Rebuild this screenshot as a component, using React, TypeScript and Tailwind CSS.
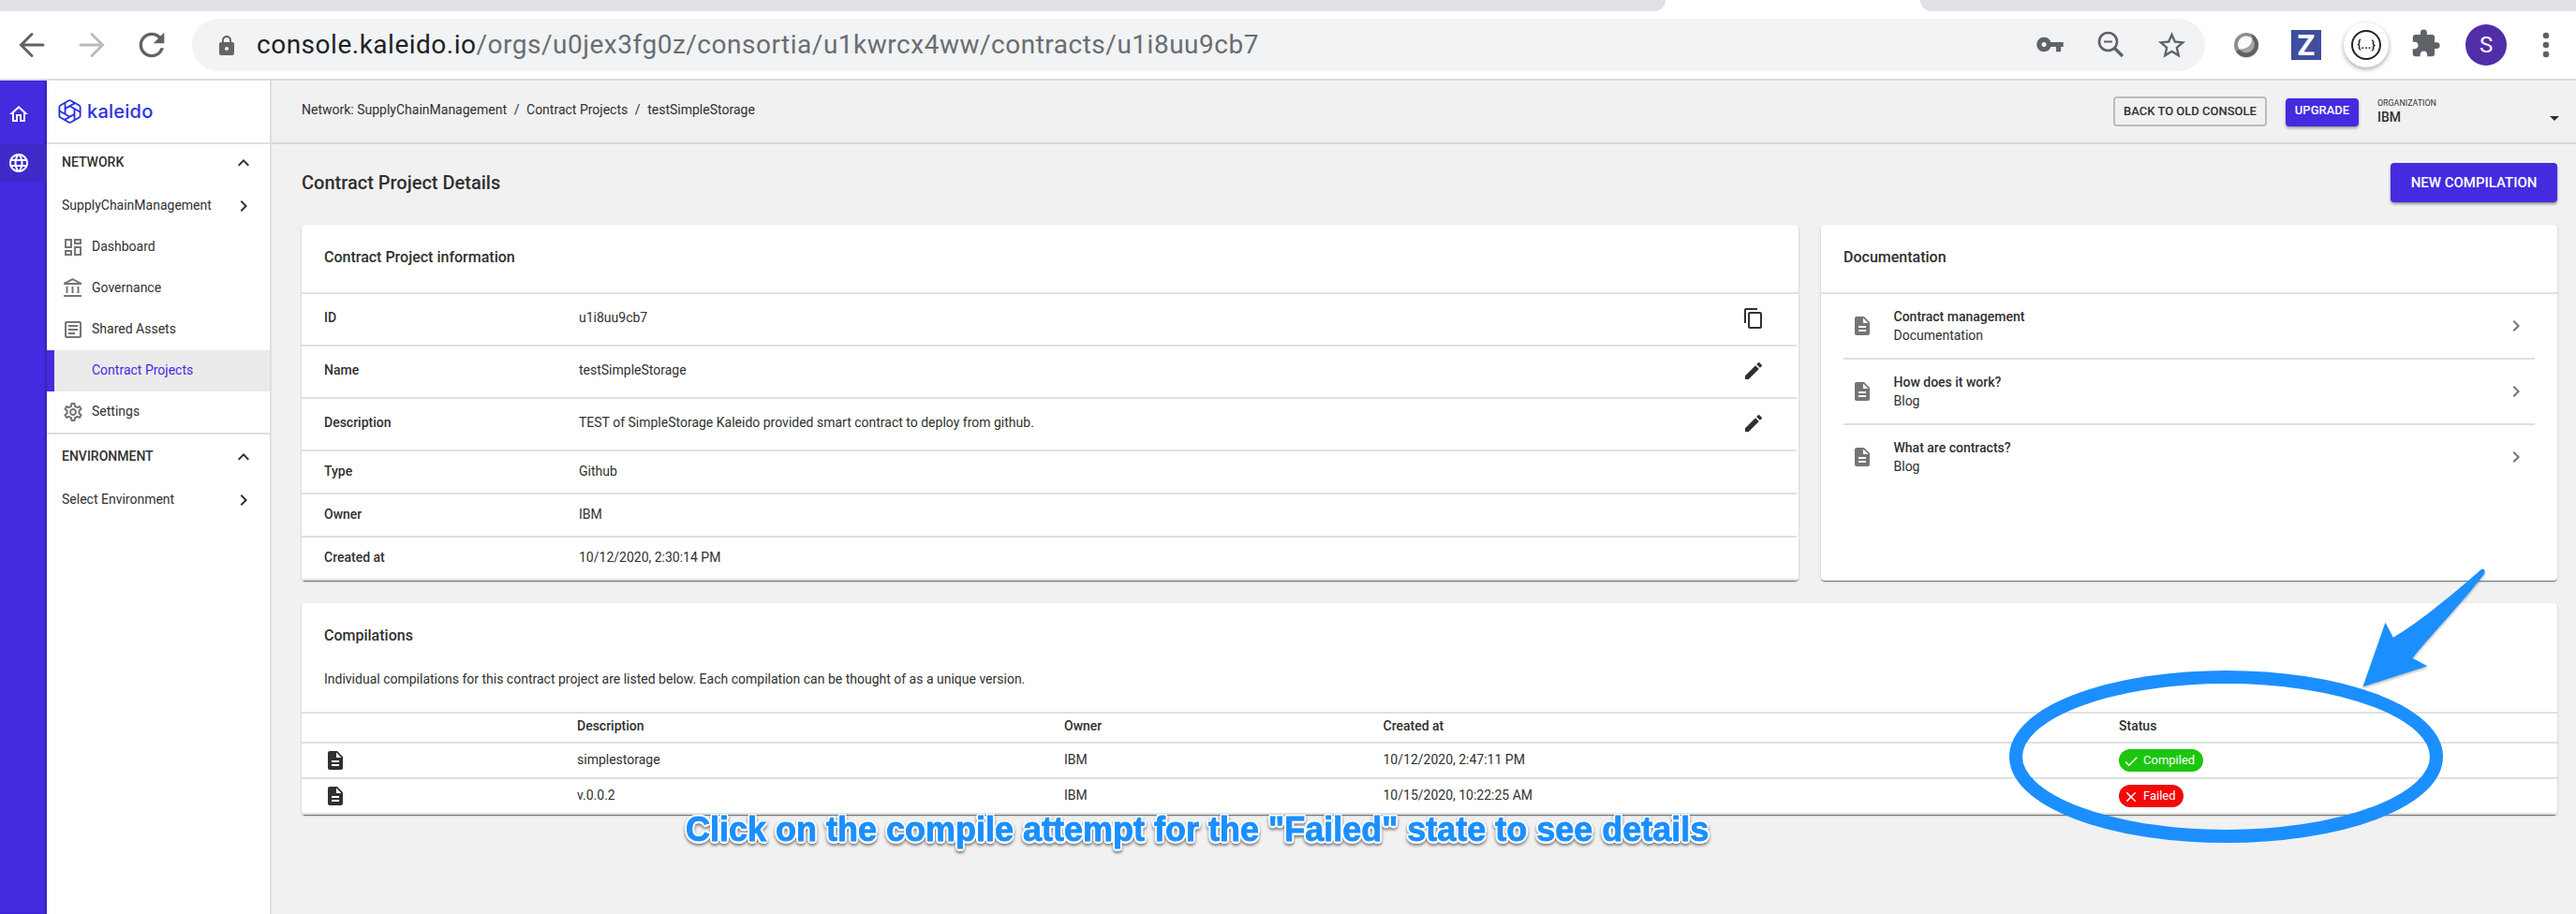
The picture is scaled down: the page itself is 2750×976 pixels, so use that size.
import React from "react";
import {
  MdArrowDropDown,
  MdCheck,
  MdChevronRight,
  MdClose,
  MdContentCopy,
  MdDescription,
  MdEdit,
  MdExpandLess,
  MdExtension,
  MdLanguage,
  MdLock,
  MdOutlineAccountBalance,
  MdOutlineArticle,
  MdOutlineDashboard,
  MdOutlineHome,
  MdOutlineSettings,
  MdRefresh,
  MdStarBorder,
  MdVpnKey,
} from "react-icons/md";

const CARD =
  "rounded-[4px] bg-white shadow-[0_2px_1px_-1px_rgba(0,0,0,0.3),0_1px_1px_0_rgba(0,0,0,0.28),0_1px_3px_0_rgba(0,0,0,0.14)]";

function TabStrip() {
  return (
    <div className="flex h-3 justify-between bg-white">
      <div className="h-3 w-[1778px] rounded-br-[14px] bg-[#dfe1e5]" />
      <div className="h-3 w-[700px] rounded-bl-[14px] bg-[#dfe1e5]" />
    </div>
  );
}

function Arrow({ className }: { className: string }) {
  return (
    <svg className={className} viewBox="0 0 28 28" fill="none" stroke="currentColor" strokeWidth="3" strokeLinecap="round">
      <path d="M26 14H3M14 2.500L2.500 14L14 25.500" strokeLinejoin="miter" />
    </svg>
  );
}

function Toolbar() {
  return (
    <div className="flex h-[74px] items-center border-b-2 border-[#dcdce0] bg-white text-[#5f6368]">
      <Arrow className="-mt-px ml-5 h-7 w-7" />
      <Arrow className="-mt-px ml-[36px] h-7 w-7 rotate-180 text-[#bcbcbe]" />
      <MdRefresh size={40} className="ml-[30px]" />
      <div className="ml-[23px] flex h-14 w-[2149px] shrink-0 items-center rounded-full bg-[#f1f3f4] pl-[25px]">
        <MdLock size={24} className="mt-px text-[#646567]" />
        <div className="ml-5 grow whitespace-nowrap text-[28px] tracking-[0.51px] text-[#6a6d71]">
          <span className="text-[#202124]">console.kaleido.io</span>
          /orgs/u0jex3fg0z/consortia/u1kwrcx4ww/contracts/u1i8uu9cb7
        </div>
        <MdVpnKey size={31} className="-mt-0.5 mr-[33px]" />
        <svg className="mr-[32px] h-8 w-8" viewBox="0 0 32 32" fill="none" stroke="currentColor">
          <circle cx="13.500" cy="12.500" r="9.500" strokeWidth="2.600" />
          <path d="M9 12.500h9" strokeWidth="2" />
          <path d="M20.500 19.500L29 28" strokeWidth="3.400" />
        </svg>
        <MdStarBorder size={35} className="mr-[18px]" />
      </div>
      <svg className="ml-[29px] h-8 w-[30px]" viewBox="0 0 30 32">
        <ellipse cx="15" cy="17" rx="13" ry="13.500" fill="#e4e4e4" />
        <circle cx="15" cy="16" r="13" fill="#8e8e8e" />
        <path d="M20 4A13 13 0 1 1 4 23L9 20L22 9Z" fill="#606060" />
        <circle cx="15" cy="15.500" r="9" fill="#a3a3a3" />
        <path d="M21 8.800A9 9 0 0 0 7.500 20.500C16 21 21.500 16 21 8.800Z" fill="#fafafa" />
      </svg>
      <div className="ml-[33px] flex h-8 w-8 items-center justify-center bg-[#3f4e9e] text-[31px] font-bold leading-none text-white">Z</div>
      <div className="ml-6 flex h-12 w-12 items-center justify-center rounded-full bg-white shadow-[0_2px_5px_rgba(0,0,0,0.35)]">
        <div className="flex h-8 w-8 items-center justify-center rounded-full border-2 border-[#222] pb-0.5 text-[13px] font-medium leading-none text-[#111]">
          {"{...}"}
        </div>
      </div>
      <MdExtension size={33} className="-mt-1 ml-[23px]" />
      <div className="ml-[26px] flex h-11 w-11 items-center justify-center rounded-full bg-[#512da8] text-[24px] text-white">S</div>
      <svg className="ml-[38px] h-7 w-2" viewBox="0 0 8 28" fill="currentColor">
        <circle cx="4" cy="4" r="3.300" />
        <circle cx="4" cy="14" r="3.300" />
        <circle cx="4" cy="24" r="3.300" />
      </svg>
    </div>
  );
}

function Rail() {
  return (
    <div className="flex w-[50px] shrink-0 flex-col bg-[#442be0] text-white shadow-[inset_-2px_0_2px_rgba(0,0,0,0.18)]">
      <div className="flex h-[68px] pl-2 pt-6">
        <MdOutlineHome size={24} />
      </div>
      <div className="flex h-10 items-center bg-[#3f2ac9] pl-2">
        <MdLanguage size={24} />
      </div>
    </div>
  );
}

function Logo() {
  return (
    <div className="flex h-[66px] items-center gap-[6px] pl-3 text-[#2a31e2]">
      <svg className="h-[26px] w-[25px]" viewBox="0 0 24 25" fill="none" stroke="currentColor" strokeWidth="1.800" strokeLinejoin="round">
        <path d="M10.800 1.400Q12 0.700 13.200 1.400L21.600 6.200Q22.700 6.900 22.700 8.200V16.800Q22.700 18.100 21.600 18.800L13.200 23.600Q12 24.300 10.800 23.600L2.400 18.800Q1.300 18.100 1.300 16.800V8.200Q1.300 6.900 2.400 6.200Z" />
        <path d="M7.200 9.750L17.300 4M12 7L22.500 13M16.800 9.750V21.300M16.800 15.250L6.700 21M12 18L1.500 12M7.200 15.250V3.700" />
      </svg>
      <span className="font-['Inter'] text-[20px] font-medium leading-none tracking-[0.25px]">kaleido</span>
    </div>
  );
}

function NavItem({ icon: Icon, label, active }: { icon?: React.ComponentType<{ size?: number; className?: string }>; label: string; active?: boolean }) {
  return (
    <div className={active ? "flex h-11 items-center border-l-8 border-[#442be0] bg-[#eaeaea] text-[#442be0]" : "flex h-11 items-center pl-4"}>
      {Icon ? <Icon size={24} className="mr-2 text-[#757575]" /> : <div className="w-10" />}
      <span className="pb-px">{label}</span>
    </div>
  );
}

function Sidebar() {
  return (
    <div className="w-[240px] shrink-0 border-r-2 border-[#dfdfdf] bg-white">
      <Logo />
      <div className="border-t-2 border-[#dfdfdf]">
        <div className="flex h-10 items-center justify-between px-4 font-medium">
          <span className="pb-px">NETWORK</span>
          <MdExpandLess size={24} />
        </div>
        <div className="flex h-12 items-center justify-between px-4 pt-[3px]">
          <span className="pb-px">SupplyChainManagement</span>
          <MdChevronRight size={24} />
        </div>
        <NavItem icon={MdOutlineDashboard} label="Dashboard" />
        <NavItem icon={MdOutlineAccountBalance} label="Governance" />
        <NavItem icon={MdOutlineArticle} label="Shared Assets" />
        <NavItem label="Contract Projects" active />
        <NavItem icon={MdOutlineSettings} label="Settings" />
      </div>
      <div className="border-t-2 border-[#dfdfdf]">
        <div className="flex h-[47px] items-center justify-between px-4 font-medium">
          <span className="pb-px">ENVIRONMENT</span>
          <MdExpandLess size={24} />
        </div>
        <div className="flex h-[46px] items-center justify-between px-4">
          <span className="pb-px">Select Environment</span>
          <MdChevronRight size={24} />
        </div>
      </div>
    </div>
  );
}

function PageHeader() {
  return (
    <div className="flex h-[68px] items-center border-b-2 border-[#d6d6d6] pl-8">
      <div className="flex grow gap-[7.600px] pb-[3px]">
        <span>Network: SupplyChainManagement</span>
        <span>/</span>
        <span>Contract Projects</span>
        <span>/</span>
        <span>testSimpleStorage</span>
      </div>
      <div className="flex h-8 w-[164px] items-center justify-center rounded-[4px] border-2 border-[#bcbcbc] pb-px text-[13px] font-medium">BACK TO OLD CONSOLE</div>
      <div className="ml-5 mt-0.5 flex h-[30px] w-[78px] items-center justify-center rounded-[4px] bg-[#442be0] pb-[4px] text-[13px] font-medium text-white shadow-[0_2px_3px_rgba(0,0,0,0.35)]">
        UPGRADE
      </div>
      <div className="ml-5 w-[177px]">
        <div className="text-[8.9px] leading-[12px]">ORGANIZATION</div>
        <div className="text-[14px] font-medium leading-[18px]">IBM</div>
      </div>
      <MdArrowDropDown size={24} className="mr-[11px] mt-[14px]" />
    </div>
  );
}

type InfoRow = { label: string; value: string; action?: "copy" | "edit" };

const INFO: InfoRow[] = [
  { label: "ID", value: "u1i8uu9cb7", action: "copy" },
  { label: "Name", value: "testSimpleStorage", action: "edit" },
  { label: "Description", value: "TEST of SimpleStorage Kaleido provided smart contract to deploy from github.", action: "edit" },
  { label: "Type", value: "Github" },
  { label: "Owner", value: "IBM" },
  { label: "Created at", value: "10/12/2020, 2:30:14 PM" },
];

function InfoCard() {
  return (
    <div className={"w-[1598px] " + CARD}>
      <div className="flex h-[74px] items-center border-b-2 border-[#e0e0e0] pb-[2px] pl-6 text-[16px] font-medium">Contract Project information</div>
      {INFO.map((row) => (
        <div
          key={row.label}
          className={row.action ? "mr-[2px] flex h-14 items-center border-b-2 border-[#e0e0e0] pb-[2px] pl-6" : "mr-[2px] flex h-[46px] items-center border-b-2 border-[#e0e0e0] pb-[2px] pl-6"}
        >
          <span className={row.action ? "w-[272px] pb-[2px] font-medium" : "w-[272px] font-medium"}>{row.label}</span>
          <span className={row.action ? "w-[1242px] pb-[2px]" : "w-[1242px]"}>{row.value}</span>
          {row.action === "copy" && <MdContentCopy size={24} />}
          {row.action === "edit" && <MdEdit size={24} />}
        </div>
      ))}
    </div>
  );
}

const DOCS = [
  { title: "Contract management", kind: "Documentation" },
  { title: "How does it work?", kind: "Blog" },
  { title: "What are contracts?", kind: "Blog" },
];

function DocsCard() {
  return (
    <div className={"w-[786px] " + CARD}>
      <div className="flex h-[74px] items-center border-b-2 border-[#e0e0e0] pb-[2px] pl-6 text-[16px] font-medium">Documentation</div>
      <div className="px-6">
        {DOCS.map((doc) => (
          <div key={doc.title} className="flex h-[70px] items-center border-b-2 border-[#e0e0e0] px-2 last:border-transparent">
            <MdDescription size={24} className="text-[#757575]" />
            <div className="ml-[21.500px] grow pb-px leading-5">
              <div className="font-medium">{doc.title}</div>
              <div>{doc.kind}</div>
            </div>
            <MdChevronRight size={24} className="text-[#757575]" />
          </div>
        ))}
      </div>
    </div>
  );
}

const COMPILATIONS = [
  { description: "simplestorage", created: "10/12/2020, 2:47:11 PM", ok: true },
  { description: "v.0.0.2", created: "10/15/2020, 10:22:25 AM", ok: false },
];

const COLUMNS = "grid grid-cols-[270px_520px_340.500px_785.500px_1fr] items-center border-b-2 border-[#e0e0e0] pl-6";

function CompilationsCard() {
  return (
    <div className={"mt-6 h-[226px] " + CARD}>
      <div className="flex h-[118px] flex-col border-b-2 border-[#e0e0e0] pl-6 pt-[23px]">
        <div className="text-[16px] font-medium leading-6">Compilations</div>
        <div className="mt-[23px] leading-[22px]">Individual compilations for this contract project are listed below. Each compilation can be thought of as a unique version.</div>
      </div>
      <div className={"h-8 pb-[3px] font-medium " + COLUMNS}>
        <span />
        <span>Description</span>
        <span>Owner</span>
        <span>Created at</span>
        <span>Status</span>
      </div>
      {COMPILATIONS.map((c) => (
        <div key={c.description} className={"h-[38px] " + COLUMNS}>
          <MdDescription size={24} />
          <span className="pb-[2px]">{c.description}</span>
          <span className="pb-[2px]">IBM</span>
          <span className="pb-[2px]">{c.created}</span>
          <div className="flex">
            {c.ok ? (
              <div className="flex h-6 items-center gap-1 rounded-full bg-[#1bc60d] pl-1 pr-[9px] text-[13px] text-white">
                <MdCheck size={18} className="mt-0.5" />
                Compiled
              </div>
            ) : (
              <div className="flex h-6 items-center gap-1 rounded-full bg-[#f20a0a] pl-1 pr-[8px] text-[13px] text-white">
                <MdClose size={18} className="mt-0.5" />
                Failed
              </div>
            )}
          </div>
        </div>
      ))}
    </div>
  );
}

function Annotations() {
  return (
    <>
      <svg className="pointer-events-none absolute left-[2130px] top-[590px] h-[330px] w-[540px]" viewBox="2130 590 540 330">
        <ellipse cx="2376.500" cy="808" rx="224.500" ry="85" fill="none" stroke="#1b8fff" strokeWidth="14" />
        <path
          className="drop-shadow-[0_2px_1px_rgba(0,0,0,0.25)]"
          d="M2522.500 733.300L2546.500 664.700L2554.800 680.700C2580 667 2630 625 2648.500 608.300C2651 606 2653.500 608.500 2652.300 612.500C2630 642 2590 684 2575.500 702.700L2591.300 711.300Z"
          fill="#1b8fff"
        />
      </svg>
      <div className="absolute left-[732px] top-[865px] whitespace-nowrap font-['Liberation_Sans'] text-[36px] font-bold leading-[42px] text-[#1b8fff] drop-shadow-[0_2px_1.500px_rgba(0,0,0,0.5)] [-webkit-text-stroke:0.9px_#1b8fff] [text-shadow:2.5px_0_0_#fff,-2.5px_0_0_#fff,0_2.5px_0_#fff,0_-2.5px_0_#fff,1.800px_1.800px_0_#fff,-1.800px_1.800px_0_#fff,1.800px_-1.800px_0_#fff,-1.800px_-1.800px_0_#fff]">
        Click on the compile attempt for the "Failed" state to see details
      </div>
    </>
  );
}

export default function App() {
  return (
    <div className="relative flex h-[976px] w-[2750px] flex-col overflow-hidden bg-[#f1f1f1] font-['Roboto',sans-serif] text-[14px] text-[#303030]">
      <TabStrip />
      <Toolbar />
      <div className="flex grow">
        <Rail />
        <Sidebar />
        <div className="w-[2460px]">
          <PageHeader />
          <div className="pl-8 pr-5">
            <div className="flex h-[86px] items-center justify-between pb-1">
              <div className="text-[20px] font-medium">Contract Project Details</div>
              <div className="flex h-[42px] w-[178px] items-center justify-center rounded-[4px] bg-[#442be0] text-[15px] font-medium text-white shadow-[0_2px_3px_rgba(0,0,0,0.4)]">
                NEW COMPILATION
              </div>
            </div>
            <div className="flex h-[380px] gap-6">
              <InfoCard />
              <DocsCard />
            </div>
            <CompilationsCard />
          </div>
        </div>
      </div>
      <Annotations />
    </div>
  );
}
